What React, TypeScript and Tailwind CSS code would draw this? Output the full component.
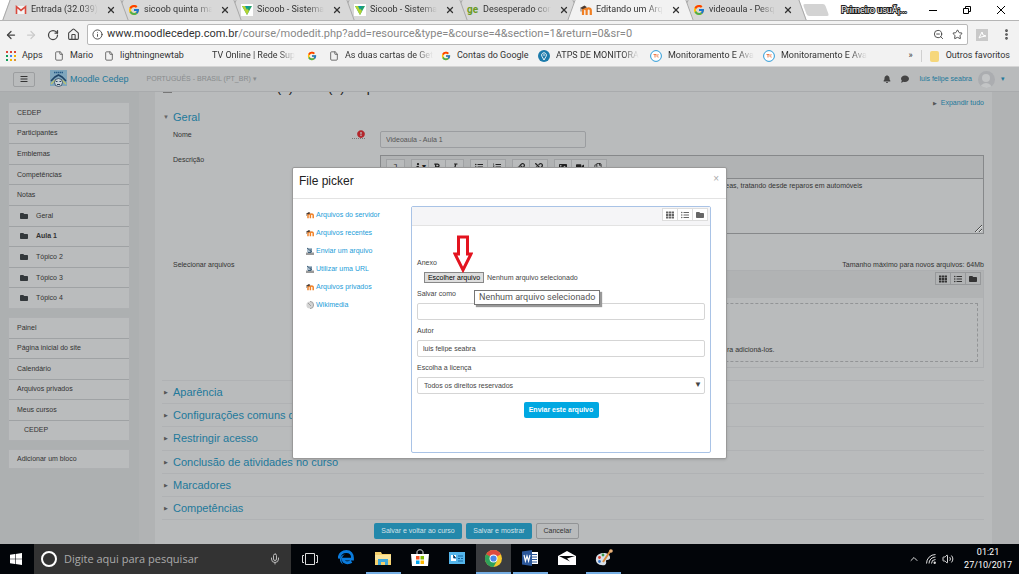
import React from "react";
import { FaBars, FaBell, FaBold, FaComment, FaExclamationCircle, FaFolder, FaImage, FaInfo, FaItalic, FaLink, FaListOl, FaListUl, FaRegCopy, FaTh, FaUnlink, FaVideo } from "react-icons/fa";
import { FcGoogle } from "react-icons/fc";
import { ArrowLeft, ArrowRight, ChevronUp, EllipsisVertical, File, House, Info, Mic, RotateCw, Star, Volume2, X, ZoomOut } from "lucide-react";

interface Tab {
  title: string,
  icon: React.ReactNode,
  active?: boolean
}

interface Bookmark {
  label: string,
  icon: React.ReactNode,
  className: string
}

const GmailIcon = () => (
  <svg className="w-3 h-3 shrink-0" viewBox="0 0 12 12">
    <path d="M1 2h10v8H1z" fill="#f4f4f4" />
    <path d="M1.5 10V2.6L6 6.4l4.5-3.8V10" fill="none" stroke="#d9493c" strokeWidth="1.6" />
  </svg>
);

const SicoobIcon = () => (
  <svg className="w-3 h-3 shrink-0" viewBox="0 0 12 12">
    <path d="M0 0h12v12H0z" fill="#fff" />
    <path d="M1 2h10L6 11z" fill="#22a06b" />
    <path d="M1 2h4l3 5-2 4z" fill="#b5d334" />
    <path d="M4 2h4L6 6z" fill="#0b9aa0" />
  </svg>
);

const MoodleIcon = ({ className = "w-3 h-3" }: { className?: string }) => (
  <svg className={`${className} shrink-0`} viewBox="0 0 12 12">
    <path d="M3 11V6.400c0-2.400 3.600-2.400 3.600 0V11M6.600 6.400c0-2.600 4.200-2.600 4.200 0V11" fill="none" stroke="#f07f23" strokeWidth="2.200" />
    <path d="M0 4l4.500-2.500L7 3.200 2.500 5.200z" fill="#4a3a30" />
    <path d="M1 4.500v3" stroke="#4a3a30" strokeWidth=".7" />
  </svg>
);

const UploadIcon = () => (
  <svg className="w-2 h-2 shrink-0" viewBox="0 0 8 8">
    <path d="M0 5.500h8V8H0z" fill="#9a9a9a" />
    <path d="M1 1h5v4.500H1z" fill="#a9bccb" />
    <path d="M1 1l5 4M5 2v3.500H2" stroke="#3f5f78" fill="none" />
  </svg>
);

const WikimediaIcon = () => (
  <svg className="w-2 h-2 shrink-0" viewBox="0 0 8 8">
    <circle cx="4" cy="4" r="3.600" fill="#d4d4d4" />
    <path d="M4 .4a3.600 3.600 0 0 1 0 7.200M2 2l3 3" stroke="#9a9a9a" strokeWidth=".9" fill="none" />
  </svg>
);

const TcIcon = () => (
  <svg className="w-3 h-3 shrink-0" viewBox="0 0 12 12">
    <circle cx="6" cy="6" r="5.400" fill="#fff" stroke="#2d9bd8" />
    <path d="M3.500 4.500h3M5 4.500v3M8.600 4.800c-2-.8-2.400 2.700 0 2.300" stroke="#ee7d4b" fill="none" />
  </svg>
);

const AtpsIcon = () => (
  <svg className="w-3 h-3 shrink-0" viewBox="0 0 12 12">
    <circle cx="6" cy="6" r="6" fill="#1c7bab" />
    <path d="M6 10L4 6.500a2.400 2.400 0 1 1 4 0z" fill="none" stroke="#fff" strokeWidth=".9" />
    <circle cx="6" cy="5" r=".8" fill="#fff" />
  </svg>
);

const AppsIcon = () => (
  <svg className="w-[10px] h-[10px] shrink-0" viewBox="0 0 10 10">
    <path d="M0 0h2v2H0zM4 0h2v2H4zM8 0h2v2H8z" fill="#db4437" />
    <path d="M0 4h2v2H0z" fill="#0f9d58" /><path d="M4 4h2v2H4z" fill="#4285f4" /><path d="M8 4h2v2H8z" fill="#f4b400" />
    <path d="M0 8h2v2H0z" fill="#0f9d58" /><path d="M4 8h2v2H4z" fill="#f4b400" /><path d="M8 8h2v2H8z" fill="#db9437" />
  </svg>
);

const CedepLogo = () => (
  <svg className="w-[17px] h-[18px]" viewBox="0 0 17 18">
    <path d="M0 0h17v16H0z" fill="#7fa6bd" />
    <path d="M4 2.500h9" stroke="#245a86" strokeWidth="1.500" strokeDasharray="1.500 .5" />
    <path d="M1 11l4-4 3.500-2L12 7l4 4" fill="none" stroke="#1f4468" strokeWidth="1.600" />
    <path d="M1 14l4-4M16 14l-4-4" stroke="#c0c46a" strokeWidth="1.200" />
    <circle cx="8.500" cy="12.500" r="4" fill="#c9d3d9" stroke="#29435c" strokeWidth=".8" />
    <path d="M6 11.500h1.500M9.500 11.500H11M7 14.500h3" stroke="#29435c" />
  </svg>
);

const tabs: Tab[] = [
  { title: "Entrada (32.039)", icon: <GmailIcon /> },
  { title: "sicoob quinta ma", icon: <FcGoogle className="w-3 h-3 shrink-0" /> },
  { title: "Sicoob - Sistema", icon: <SicoobIcon /> },
  { title: "Sicoob - Sistema", icon: <SicoobIcon /> },
  { title: "Desesperado con", icon: <span className="w-3 shrink-0 text-[10px] leading-3 font-bold text-[#6a9a1f]">ge</span> },
  { title: "Editando um Arq", icon: <MoodleIcon />, active: true },
  { title: "videoaula - Pesq", icon: <FcGoogle className="w-3 h-3 shrink-0" /> },
];

const page = <File className="w-[10px] h-3 shrink-0 text-[#555]" />;
const google = <FcGoogle className="w-[10px] h-[10px] shrink-0" />;

const bookmarks: Bookmark[] = [
  { label: "Apps", icon: <AppsIcon />, className: "w-[48px]" },
  { label: "Mario", icon: page, className: "w-[50px]" },
  { label: "lightningnewtab", icon: page, className: "w-[92px]" },
  { label: "TV Online | Rede Sup", icon: <span className="w-[10px]" />, className: "w-[111px]" },
  { label: "", icon: google, className: "w-[22px]" },
  { label: "As duas cartas de Get", icon: page, className: "w-[112px]" },
  { label: "Contas do Google", icon: google, className: "w-[97px]" },
  { label: "ATPS DE MONITORA", icon: <AtpsIcon />, className: "w-[112px]" },
  { label: "Monitoramento E Ava", icon: <TcIcon />, className: "w-[113px]" },
  { label: "Monitoramento E Ava", icon: <TcIcon />, className: "w-[113px]" },
];

const courseMenu = ["CEDEP", "Participantes", "Emblemas", "Competências", "Notas"];
const topics = ["Geral", "Aula 1", "Tópico 2", "Tópico 3", "Tópico 4"];
const siteMenu = ["Painel", "Página inicial do site", "Calendário", "Arquivos privados", "Meus cursos"];
const sections = ["Aparência", "Configurações comuns de módulos", "Restringir acesso", "Conclusão de atividades no curso", "Marcadores", "Competências"];

const repositories = [
  { name: "Arquivos do servidor", icon: <MoodleIcon className="w-2 h-2" /> },
  { name: "Arquivos recentes", icon: <MoodleIcon className="w-2 h-2" /> },
  { name: "Enviar um arquivo", icon: <UploadIcon /> },
  { name: "Utilizar uma URL", icon: <UploadIcon /> },
  { name: "Arquivos privados", icon: <MoodleIcon className="w-2 h-2" /> },
  { name: "Wikimedia", icon: <WikimediaIcon /> },
];

const BrowserTab = ({ tab, index }: { tab: Tab, index: number }) => {
  const fill = tab.active ? "bg-[#f2f2f2] border-[#a5a5a5]" : "bg-[#d8d8d8] border-[#a8a8a8]";
  return (
    <div className="relative flex-1 min-w-0 h-full" style={{ zIndex: tab.active ? 20 : 10 - index }}>
      <span className={`absolute inset-y-0 left-1 right-1/2 -skew-x-[20deg] border-l ${fill}`} />
      <span className={`absolute inset-y-0 left-1/3 -right-[10px] skew-x-[20deg] border-r ${fill}`} />
      <div className="relative flex items-center h-full pl-[13px] gap-1">
        {tab.icon}
        <span className="w-[68px] whitespace-nowrap text-[9px] [mask-image:linear-gradient(to_right,black_75%,transparent)]">{tab.title}</span>
        <button aria-label="Fechar guia" className="ml-1"><X className="w-[10px] h-[10px]" strokeWidth={3} /></button>
      </div>
    </div>
  );
};

const Browser = () => (
  <header className="shrink-0 font-[Roboto,sans-serif] text-[#333]">
    <div className="flex h-[21px] border-b border-[#b5b5b5]">
      <div className="flex w-[791px] ml-[2px]">
        {tabs.map((tab, i) => <BrowserTab key={i} tab={tab} index={i} />)}
      </div>
      <span className="w-[22px] h-3 mt-1 ml-3 skew-x-[20deg] rounded-xs bg-[#d3d3d3]" />
      <span className="ml-auto mt-1 text-[9px] leading-3 text-white [-webkit-text-stroke:2px_#222] [paint-order:stroke_fill]">Primeiro usuÃ¡...</span>
      <div className="flex w-[112px] pl-[22px] pr-[14px] items-center justify-between text-black">
        <button aria-label="Minimizar"><svg className="w-2 h-2" viewBox="0 0 8 8"><path d="M0 4.500h8" stroke="currentColor" /></svg></button>
        <button aria-label="Restaurar"><svg className="w-2 h-2" viewBox="0 0 8 8"><path d="M.5 2.500h5v5h-5zM2.500 2.500v-2h5v5h-2" fill="none" stroke="currentColor" /></svg></button>
        <button aria-label="Fechar"><svg className="w-2 h-2" viewBox="0 0 8 8"><path d="M0 0l8 8M8 0L0 8" stroke="currentColor" /></svg></button>
      </div>
    </div>
    <div className="flex items-center h-[27px] bg-[#f2f2f2] pl-[5px] pr-[6px] text-[#444]">
      <button aria-label="Voltar"><ArrowLeft className="w-3 h-3" strokeWidth={2.5} /></button>
      <button aria-label="Avançar" className="ml-2 text-[#ccc]"><ArrowRight className="w-3 h-3" strokeWidth={2.5} /></button>
      <button aria-label="Recarregar" className="ml-[10px]"><RotateCw className="w-3 h-3" strokeWidth={2.5} /></button>
      <button aria-label="Página inicial" className="ml-2"><House className="w-[13px] h-[13px]" /></button>
      <div className="flex flex-1 items-center h-[21px] ml-[7px] px-1 bg-white border border-[#b8b8b8] rounded-xs">
        <Info className="w-[11px] h-[11px]" />
        <span className="ml-1 text-[11px] text-[#888]"><span className="text-[#333]">www.moodlecedep.com.br</span>/course/modedit.php?add=resource&amp;type=&amp;course=4&amp;section=1&amp;return=0&amp;sr=0</span>
        <ZoomOut className="w-[11px] h-[11px] ml-auto" />
        <Star className="w-[11px] h-[11px] ml-2" />
      </div>
      <svg className="w-3 h-3 ml-2" viewBox="0 0 12 12"><path d="M0 0h12v12H0z" fill="#c9c9c9" /><path d="M3 9l3-6 1 3 3 1-5 1z" fill="none" stroke="#fff" /></svg>
      <button aria-label="Menu" className="ml-3"><EllipsisVertical className="w-[13px] h-[13px]" strokeWidth={3} /></button>
    </div>
    <div className="flex items-center h-[19px] pb-[2px] pl-[6px] pr-[9px] bg-[#f2f2f2] border-b border-[#d5d5d5] text-[9px]">
      {bookmarks.map((b, i) => (
        <a key={i} href="#" className={`flex items-center shrink-0 ${b.className}`}>
          {b.icon}
          {b.label && <span className={`ml-[6px] whitespace-nowrap ${b.label.length > 16 || b.label.startsWith("ATPS") ? "[mask-image:linear-gradient(to_right,black_80%,transparent)]" : ""}`}>{b.label}</span>}
        </a>
      ))}
      <span className="ml-auto">»</span>
      <span className="w-px h-3 mx-2 bg-[#d0d0d0]" />
      <a href="#" className="flex items-center gap-[7px] whitespace-nowrap">
        <span className="w-[9px] h-[11px] rounded-xs bg-[#f6d77b]" />
        Outros favoritos
      </a>
    </div>
  </header>
);

const Row = ({ children, className = "" }: { children: React.ReactNode, className?: string }) => (
  <a href="#" className={`flex flex-1 items-center pl-2 bg-[#babcbd] border-b border-[#9fa2a4] last:border-b-0 ${className}`}>{children}</a>
);

const Sidebar = () => (
  <aside className="flex flex-col gap-2 shrink-0 w-[139px] pt-[10px] pl-2 pr-[9px] bg-[#adb0b1]">
    <nav className="flex flex-col h-[207px] border border-[#aeb0b2]">
      {courseMenu.map(item => <Row key={item}>{item}</Row>)}
      {topics.map(item => (
        <Row key={item} className={item === "Aula 1" ? "font-bold" : ""}>
          <FaFolder className="w-2 h-2 ml-[3px] mr-2 text-[#33383b]" />{item}
        </Row>
      ))}
    </nav>
    <nav className="flex flex-col h-[124px] border border-[#aeb0b2]">
      {siteMenu.map(item => <Row key={item}>{item}</Row>)}
      <Row><span className="ml-[7px]">CEDEP</span></Row>
    </nav>
    <nav className="flex flex-col h-5 border border-[#aeb0b2]">
      <Row>Adicionar um bloco</Row>
    </nav>
  </aside>
);

const ViewButtons = ({ className }: { className: string }) => (
  <div className={`flex border divide-x text-[8px] ${className}`}>
    <button aria-label="Ícones" className="flex w-[15px] h-[11px] items-center justify-center"><FaTh /></button>
    <button aria-label="Lista" className="flex w-[15px] h-[11px] items-center justify-center"><FaListUl /></button>
    <button aria-label="Árvore" className="flex w-[14px] h-[11px] items-center justify-center"><FaFolder /></button>
  </div>
);

const ToolGroup = ({ children }: { children: React.ReactNode }) => (
  <div className="flex h-4 border border-[#a0a2a4] divide-x divide-[#a0a2a4] bg-[#b9bbbc] *:w-[17px] *:flex *:items-center *:justify-center">{children}</div>
);

const EditForm = () => (
  <form className="flex-1 min-w-0 overflow-hidden ml-4 pl-[7px] pr-2 bg-[#b9bbbc]" onSubmit={e => e.preventDefault()}>
    <div className="flex h-4 pl-[1px] items-start">
      <span className="w-[9px] h-[9px] -mt-2 border border-[#777]" />
      <h2 className="ml-1 text-[14px] leading-4 -mt-[13px] text-[#222]">Adicionando um(a) novo(a) Arquivo</h2>
      <a href="#" className="ml-auto self-end text-[#22799b]"><span className="mr-1 text-[5px] text-[#555]">▶</span>Expandir tudo</a>
    </div>
    <h3 className="flex items-center h-[17px] text-[11px] text-[#22799b]">
      <span className="w-[11px] pl-[1px] text-[6px] text-[#666]">▼</span>Geral
    </h3>
    <div className="flex items-start h-[30px] pl-[11px] pt-[5px]">
      <div className="flex w-[207px] shrink-0 justify-between pr-[15px]">
        <label htmlFor="nome">Nome</label>
        <span className="pl-[5px] h-[9px] border-b border-dotted border-[#777]"><FaExclamationCircle className="w-2 h-2 text-[#b3262c]" /></span>
      </div>
      <input id="nome" defaultValue="Videoaula - Aula 1" className="block w-[206px] h-[17px] mt-[1px] pl-[5px] border border-[#9b9da0] rounded-xs text-[#555]" />
    </div>
    <div className="flex h-[80px] pl-[11px]">
      <label htmlFor="descricao" className="w-[207px] shrink-0">Descrição</label>
      <div className="flex flex-1 flex-col h-[79px] border border-[#86888a]">
        <div className="flex h-[23px] pl-[5px] pt-[3px] gap-[6px] bg-[#b1b3b4] border-b border-[#86888a] text-[8px] text-[#222]">
          <ToolGroup><button aria-label="Expandir">↴</button></ToolGroup>
          <ToolGroup><button aria-label="Estilo"><FaInfo />▾</button><button aria-label="Negrito"><FaBold /></button><button aria-label="Itálico"><FaItalic /></button></ToolGroup>
          <ToolGroup><button aria-label="Lista"><FaListUl /></button><button aria-label="Lista numerada"><FaListOl /></button></ToolGroup>
          <ToolGroup><button aria-label="Link"><FaLink /></button><button aria-label="Remover link"><FaUnlink /></button></ToolGroup>
          <ToolGroup><button aria-label="Imagem"><FaImage /></button><button aria-label="Mídia"><FaVideo /></button><button aria-label="Arquivos"><FaRegCopy /></button></ToolGroup>
        </div>
        <textarea id="descricao" className="flex-1 pl-[342px] pt-[2px] resize text-[#333]" defaultValue="reas, tratando desde reparos em automóveis" />
      </div>
    </div>
    <div className="flex h-[145px] pl-[11px] pt-[25px]">
      <span className="w-[207px] shrink-0">Selecionar arquivos</span>
      <div className="flex flex-1 flex-col">
        <p className="text-right">Tamanho máximo para novos arquivos: 64Mb</p>
        <div className="flex flex-col h-[98px] border border-[#adafb1]">
          <div className="flex h-[27px] pt-[1px] pr-[2px] justify-end items-start bg-[#b1b3b4]">
            <ViewButtons className="border-[#96989a] divide-[#96989a] text-[#333]" />
          </div>
          <div className="flex flex-1 items-end pb-[6px] m-[5px] pl-[340px] border border-dashed border-[#929496]">ra adicioná-los.</div>
        </div>
      </div>
    </div>
    <div className="flex flex-col h-[140px] border-y border-[#b0b2b4] divide-y divide-[#b0b2b4]">
      {sections.map(title => (
        <h3 key={title} className="flex flex-1 items-center text-[11px] text-[#22799b]">
          <span className="w-[11px] pl-[2px] text-[5px] text-[#555]">▶</span>
          <a href="#">{title}</a>
        </h3>
      ))}
    </div>
    <div className="flex gap-1 mt-[3px] pl-[212px] text-[#d4e2e8]">
      <button className="w-[88px] h-4 rounded-xs bg-[#2388ab]">Salvar e voltar ao curso</button>
      <button className="w-[66px] h-4 rounded-xs bg-[#2388ab]">Salvar e mostrar</button>
      <button className="w-[43px] h-4 rounded-xs border border-[#929496] text-[#333]">Cancelar</button>
    </div>
  </form>
);

const FilePicker = () => {

  const fileRef = React.useRef<HTMLInputElement>(null);

  return (
    <div role="dialog" aria-label="File picker" className="absolute inset-x-0 top-[100px] mx-auto w-[435px] bg-white border border-[#999] rounded-xs shadow-sm text-[#444]">
      <div className="flex items-start h-[31px] pl-[6px] pr-[7px] pt-[5px] border-b border-[#e3e3e3]">
        <h3 className="text-[12px] leading-4 text-[#222]">File picker</h3>
        <button aria-label="Fechar" className="ml-auto text-[10px] leading-3 text-[#aaa]">×</button>
      </div>
      <div className="flex pt-[7px] pb-[5px] pl-[13px] pr-[15px]">
        <ul className="w-[105px] shrink-0">
          {repositories.map(repo => (
            <li key={repo.name} className="h-[18px]">
              <a href="#" className="flex items-center gap-[2px] h-[18px] text-[#1b9cd8]">{repo.icon}{repo.name}</a>
            </li>
          ))}
        </ul>
        <div className="flex-1 h-[247px] border border-[#a9c3e6] rounded-xs">
          <div className="flex h-[19px] pt-[1px] pr-[2px] justify-end items-start bg-[#f5f5f7] border-b border-[#e3e3e3]">
            <ViewButtons className="border-[#ddd] divide-[#ddd] bg-white text-[#666]" />
          </div>
          <form className="px-[5px] pt-[32px]" onSubmit={e => e.preventDefault()}>
            <label htmlFor="anexo" className="block h-[14px]">Anexo</label>
            <div className="relative flex items-center h-[11px] pl-[7px] gap-[3px]">
              <input ref={fileRef} id="anexo" type="file" className="hidden" />
              <button type="button" onClick={() => fileRef.current?.click()} className="w-[60px] h-[11px] border border-[#888] bg-[#dedede] leading-[9px] text-black">Escolher arquivo</button>
              <span>Nenhum arquivo selecionado</span>
              <svg className="absolute left-[36px] -top-[37px] w-5 h-[38px]" viewBox="0 0 20 38">
                <path d="M5.500 2h9v17h3.500L10 35 2 19h3.500z" fill="#fff" stroke="#e3131f" strokeWidth="3" />
              </svg>
              <span role="tooltip" className="absolute left-[57px] top-[18px] h-[15px] px-1 border border-[#767676] bg-white shadow-[2px_2px_1px_#999] font-[Roboto,sans-serif] text-[9px] leading-[13px] whitespace-nowrap text-[#555]">Nenhum arquivo selecionado</span>
            </div>
            <label htmlFor="salvar" className="block mt-[6px] h-[14px]">Salvar como</label>
            <input id="salvar" className="block w-full h-[17px] px-[5px] border border-[#d5d5d5] rounded-xs" />
            <label htmlFor="autor" className="block mt-[6px] h-[14px]">Autor</label>
            <input id="autor" defaultValue="luis felipe seabra" className="block w-full h-[17px] px-[5px] border border-[#d5d5d5] rounded-xs" />
            <label htmlFor="licenca" className="block mt-[6px] h-[14px]">Escolha a licença</label>
            <div className="relative">
              <select id="licenca" className="block w-full h-[17px] px-[6px] appearance-none border border-[#d5d5d5] rounded-xs">
                <option>Todos os direitos reservados</option>
              </select>
              <span className="absolute right-[3px] top-[3px] text-[8px] pointer-events-none">▼</span>
            </div>
            <button className="block mx-auto mt-2 w-[75px] h-4 rounded-xs bg-[#00a8e2] font-bold text-white">Enviar este arquivo</button>
          </form>
        </div>
      </div>
    </div>
  );
};

const taskApps = [
  { name: "Edge", open: false, icon: <svg className="w-4 h-4" viewBox="0 0 16 16"><path d="M1 8.500C1.500 3.500 5 1.500 8.300 1.500c4.200 0 6.200 3 6.200 6.500v1.200H5.200c.2 4 5.300 4.300 8.300 2.300" fill="none" stroke="#0a7bdc" strokeWidth="2.800" /><path d="M2 8.500c1-2.500 3-4 5-4.200-1.800 1.200-3.600 3.400-3.400 6.400.2 1.800 1 3 2 4C3 13.500 1.400 11 2 8.500z" fill="#0a7bdc" /></svg> },
  { name: "Explorador", open: true, icon: <svg className="w-4 h-4" viewBox="0 0 16 16"><path d="M0 2h6l1 2h9v11H0z" fill="#f5d06c" /><path d="M0 5h16v5H0z" fill="#fbe59c" /><path d="M3 15V9h10v6h-3v-3H6v3z" fill="#3fa9dc" /></svg> },
  { name: "Loja", open: false, icon: <svg className="w-[18px] h-[18px]" viewBox="0 0 18 18"><path d="M6 6V3c0-3 6-3 6 0v3" fill="none" stroke="#ddd" /><path d="M0 5h18l-1 12H1z" fill="#fff" /><path d="M5 7h3.500v3.500H5z" fill="#f25022" /><path d="M9.500 7H13v3.500H9.500z" fill="#7fba00" /><path d="M5 11.500h3.500V15H5z" fill="#00a4ef" /><path d="M9.500 11.500H13V15H9.500z" fill="#ffb900" /></svg> },
  { name: "Painel", open: false, icon: <svg className="w-4 h-3" viewBox="0 0 16 12"><path d="M0 0h16v12H0z" fill="#54b5ea" /><path d="M2 3h5v6H2z" fill="#fff" /><path d="M4.500 3v3H7M9 4h5M9 6.500h2M12 6.500h2M9 9h5" stroke="#1667a3" /></svg> },
  { name: "Chrome", open: true, icon: <svg className="w-[17px] h-[17px]" viewBox="0 0 18 18"><circle cx="9" cy="9" r="9" fill="#f7c92d" /><path d="M9 9L1.200 4.500A9 9 0 0 1 16.800 4.500z" fill="#dd4b3e" /><path d="M16.800 4.500H9L5 6.500 1.200 4.500z" fill="#dd4b3e" /><path d="M1.200 4.500A9 9 0 0 0 9 18l3.900-6.800L9 9z" fill="#2fa05a" /><circle cx="9" cy="9" r="4.200" fill="#fff" /><circle cx="9" cy="9" r="3.300" fill="#4a86e8" /></svg> },
  { name: "Word", open: true, icon: <svg className="w-4 h-4" viewBox="0 0 16 16"><path d="M8 2h8v12H8z" fill="#fff" /><path d="M10 4.500h5M10 7h5M10 9.500h5M10 12h5" stroke="#2b579a" /><path d="M0 1.500L10 0v16L0 14.500z" fill="#2b579a" /><path d="M2 5l1.400 6L5 6l1.600 5L8 5" fill="none" stroke="#fff" strokeWidth="1.200" /></svg> },
  { name: "Email", open: false, icon: <svg className="w-[18px] h-4" viewBox="0 0 18 16"><path d="M0 6l9-5 9 5v9H0z" fill="#fff" /><path d="M1 6h16l-8 2.500 3 3z" fill="#050608" /></svg> },
  { name: "Paint", open: true, icon: <svg className="w-[18px] h-[18px]" viewBox="0 0 18 18"><path d="M1 9c1-6 13-7 14-1 .6 4-4 2-4 4 0 1 1 2-1 4C4 17 0 14 1 9z" fill="#d7dfe8" /><circle cx="4.500" cy="8.500" r="1.400" fill="#d9412f" /><circle cx="8" cy="6" r="1.400" fill="#3c9b48" /><circle cx="4.500" cy="12.500" r="1.400" fill="#3c78c8" /><path d="M16 1L8 13" stroke="#d98b3c" strokeWidth="2" /><circle cx="16" cy="2" r="1.800" fill="#e9b27a" /></svg> },
];

const Taskbar = () => (
  <footer className="flex shrink-0 h-[30px] bg-[#020509] font-['Open_Sans',sans-serif] text-white">
    <button aria-label="Iniciar" className="flex w-[34px] pr-[2px] items-center justify-center">
      <svg className="w-3 h-3" viewBox="0 0 12 12"><path d="M0 1.700l5-.7v4.700H0zM5.600.9L12 0v5.700H5.600zM0 6.300h5V11l-5-.7zM5.600 6.300H12V12l-6.400-.9z" fill="#fff" /></svg>
    </button>
    <div className="flex items-center w-[257px] pl-[7px] pr-[10px] bg-[#333]">
      <span className="w-4 h-4 shrink-0 rounded-full border-2 border-white" />
      <input aria-label="Pesquisar" placeholder="Digite aqui para pesquisar" className="flex-1 min-w-0 ml-[7px] text-[11px] placeholder:text-[#aaa]" />
      <Mic className="w-3 h-3 shrink-0 text-[#bbb]" />
    </div>
    <button aria-label="Visão de tarefas" className="flex w-[37px] items-center justify-center">
      <svg className="w-4 h-3" viewBox="0 0 16 12"><path d="M3.500.5h9v11h-9zM2 2.500H.5v7H2M14 2.500h1.500v7H14" fill="none" stroke="#ddd" /></svg>
    </button>
    <div className="flex w-[294px]">
      {taskApps.map(app => (
        <button key={app.name} aria-label={app.name} className={`flex flex-1 items-center justify-center mx-[1px] border-b-2 ${app.open ? "border-[#76aee3]" : "border-transparent"} ${app.name === "Chrome" ? "bg-[#3a3c3f]" : ""}`}>{app.icon}</button>
      ))}
    </div>
    <div className="flex items-center gap-[6px] ml-auto pr-[7px] text-[#ddd]">
      <ChevronUp className="w-3 h-3" />
      <svg className="w-[10px] h-[10px]" viewBox="0 0 10 10"><path d="M.5 9.500a9 9 0 0 1 9-9M3 9.500A6.500 6.500 0 0 1 9.500 3M5.500 9.500a4 4 0 0 1 4-4" fill="none" stroke="currentColor" /><circle cx="8.700" cy="8.700" r="1.200" fill="currentColor" /></svg>
      <Volume2 className="w-3 h-3" />
      <p className="ml-1 text-center font-[Roboto,sans-serif] text-[9px] leading-[13px] text-white">01:21<br />27/10/2017</p>
    </div>
  </footer>
);

const App: React.FunctionComponent = () => {
  return (
    <div className="pr-[5px] bg-white">
      <div className="flex flex-col h-screen overflow-hidden">
        <Browser />
        <div className="relative flex flex-1 min-h-0 flex-col bg-[#b1b3b4] font-['Liberation_Sans',Arial,sans-serif] text-[7px] leading-[10px] text-[#333]">
          <nav className="relative z-10 flex shrink-0 items-center h-[25px] pl-[13px] pr-[14px] bg-[#b9bbbc] border-b border-[#a9abad]">
            <button aria-label="Menu lateral" className="flex w-[22px] h-[15px] items-center justify-center border border-[#9c9ea0] rounded-xs"><FaBars className="w-2 h-2" /></button>
            <a href="#" className="flex items-center gap-[3px] ml-[15px] text-[9px] text-[#22799b]"><CedepLogo />Moodle Cedep</a>
            <button className="ml-[18px] text-[#888b8d]">PORTUGUÊS - BRASIL (PT_BR) ▾</button>
            <FaBell className="w-2 h-2 ml-auto text-[#444]" />
            <FaComment className="w-2 h-2 ml-[10px] text-[#444]" />
            <a href="#" className="ml-[10px] text-[#22799b]">luis felipe seabra</a>
            <span className="relative w-[17px] h-[17px] ml-[6px] overflow-hidden rounded-full bg-[#abadb0]">
              <span className="absolute left-1 top-[3px] w-2 h-2 rounded-full bg-[#c3c5c6]" />
              <span className="absolute left-[2px] top-3 w-3 h-3 rounded-full bg-[#c3c5c6]" />
            </span>
            <span className="ml-[6px] text-[#22799b]">▾</span>
          </nav>
          <div className="flex flex-1 min-h-0 pr-[27px]">
            <Sidebar />
            <EditForm />
          </div>
          <FilePicker />
        </div>
        <Taskbar />
      </div>
    </div>
  );
};

export default App;
